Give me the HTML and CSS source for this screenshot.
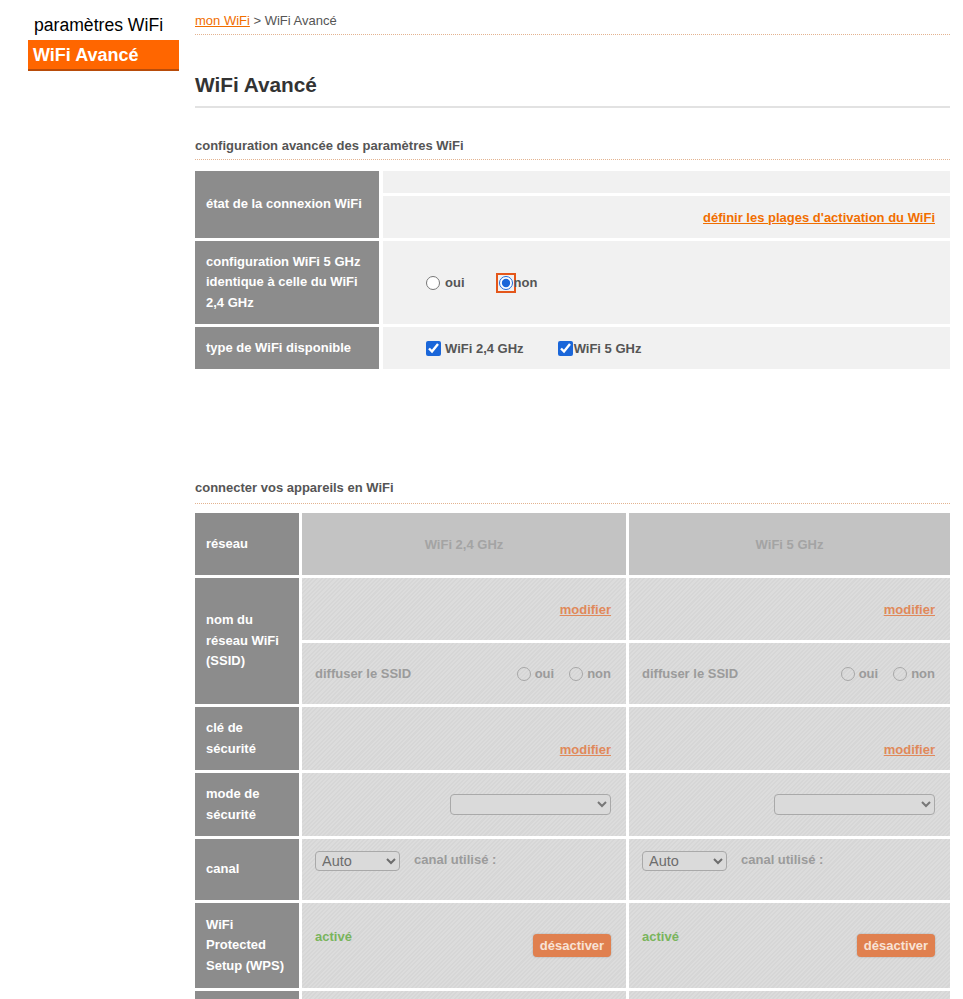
FILE: index.html
```html
<!DOCTYPE html>
<html lang="fr">
<head>
<meta charset="utf-8">
<title>WiFi Avancé</title>
<link rel="stylesheet" href="styles.css">
</head>
<body>
<div class="page">
  <nav class="sidebar">
    <div class="side-item">paramètres WiFi</div>
    <div class="side-item active">WiFi Avancé</div>
  </nav>
  <main class="main">
    <div class="breadcrumb"><a href="#" class="crumb-link">mon WiFi</a> &gt; WiFi Avancé</div>
    <h1 class="title">WiFi Avancé</h1>

    <h2 class="section-title">configuration avancée des paramètres WiFi</h2>
    <div class="grid1">
      <div class="head span2">état de la connexion WiFi</div>
      <div class="cell1"></div>
      <div class="cell1 right"><a href="#" class="link">définir les plages d'activation du WiFi</a></div>

      <div class="head">configuration WiFi 5 GHz identique à celle du WiFi 2,4 GHz</div>
      <div class="cell1 opts">
        <label class="opt"><input type="radio" name="same" class="radio">oui</label>
        <label class="opt tight"><input type="radio" name="same" class="radio focus" checked>non</label>
      </div>

      <div class="head">type de WiFi disponible</div>
      <div class="cell1 opts">
        <label class="opt"><input type="checkbox" class="check" checked>WiFi 2,4 GHz</label>
        <label class="opt tight"><input type="checkbox" class="check" checked>WiFi 5 GHz</label>
      </div>
    </div>

    <h2 class="section-title second">connecter vos appareils en WiFi</h2>
    <div class="grid2">
      <div class="head">réseau</div>
      <div class="band">WiFi 2,4 GHz</div>
      <div class="band">WiFi 5 GHz</div>

      <div class="head span2">nom du réseau WiFi (SSID)</div>
      <div class="cell2 right"><a href="#" class="mod">modifier</a></div>
      <div class="cell2 right"><a href="#" class="mod">modifier</a></div>
      <div class="cell2 between">
        <span>diffuser le SSID</span>
        <span class="radios">
          <label class="ropt"><input type="radio" class="dradio" disabled>oui</label>
          <label class="ropt"><input type="radio" class="dradio" disabled>non</label>
        </span>
      </div>
      <div class="cell2 between">
        <span>diffuser le SSID</span>
        <span class="radios">
          <label class="ropt"><input type="radio" class="dradio" disabled>oui</label>
          <label class="ropt"><input type="radio" class="dradio" disabled>non</label>
        </span>
      </div>

      <div class="head">clé de sécurité</div>
      <div class="cell2 right bottom"><a href="#" class="mod">modifier</a></div>
      <div class="cell2 right bottom"><a href="#" class="mod">modifier</a></div>

      <div class="head">mode de sécurité</div>
      <div class="cell2 right"><select class="sel-mode"><option></option></select></div>
      <div class="cell2 right"><select class="sel-mode"><option></option></select></div>

      <div class="head">canal</div>
      <div class="cell2 top">
        <select class="sel-canal"><option>Auto</option></select>
        <span class="used">canal utilisé :</span>
      </div>
      <div class="cell2 top">
        <select class="sel-canal"><option>Auto</option></select>
        <span class="used">canal utilisé :</span>
      </div>

      <div class="head">WiFi Protected Setup (WPS)</div>
      <div class="cell2 between">
        <span class="active-txt">activé</span>
        <button class="btn">désactiver</button>
      </div>
      <div class="cell2 between">
        <span class="active-txt">activé</span>
        <button class="btn">désactiver</button>
      </div>

      <div class="head"></div>
      <div class="cell2"></div>
      <div class="cell2"></div>
    </div>
  </main>
</div>
</body>
</html>
```

FILE: styles.css
```css
* { box-sizing: border-box; }

body {
  margin: 0;
  background: #fff;
  font-family: "Liberation Sans", Arial, sans-serif;
  color: #555;
}

.page {
  display: flex;
  align-items: flex-start;
}

/* sidebar */
.sidebar {
  flex: none;
  width: 151px;
  margin-left: 28px;
  padding-top: 13px;
}

.side-item {
  height: 27px;
  line-height: 25px;
  padding-left: 6px;
  font-size: 17.6px;
  color: #000;
}

.side-item.active {
  height: 31px;
  line-height: 31px;
  padding-left: 5px;
  background: #ff6600;
  border-bottom: 2px solid #b84c0a;
  color: #fff;
  font-size: 18px;
  font-weight: bold;
}

/* main */
.main {
  flex: none;
  width: 755px;
  margin-left: 16px;
  padding-bottom: 40px;
}

.breadcrumb {
  padding-top: 13px;
  padding-bottom: 5px;
  font-size: 13px;
  line-height: 16px;
  color: #555;
  border-bottom: 1px dotted #e3b390;
}

.crumb-link {
  color: #f16e00;
  text-decoration: underline;
}

.title {
  margin: 38px 0 0;
  padding-bottom: 9px;
  font-size: 20.8px;
  line-height: 24px;
  font-weight: bold;
  color: #333;
  border-bottom: 2px solid #e2e2e2;
}

.section-title {
  margin: 30px 0 0;
  padding-bottom: 5px;
  font-size: 13px;
  line-height: 16px;
  font-weight: bold;
  color: #555;
  border-bottom: 1px dotted #e3b390;
}

.section-title.second {
  margin-top: 111px;
  padding-bottom: 7px;
}

/* grid 1 */
.grid1 {
  display: grid;
  grid-template-columns: 184px 1fr;
  grid-template-rows: 22px 42px 83px 42px;
  column-gap: 4px;
  row-gap: 3px;
  margin-top: 11px;
}

.head {
  display: flex;
  align-items: center;
  padding: 0 11px;
  background: #8c8c8c;
  color: #fff;
  font-size: 13px;
  line-height: 20.5px;
  font-weight: bold;
}

.span2 { grid-row: span 2; }

.cell1 {
  display: flex;
  align-items: center;
  background: #f1f1f1;
}

.cell1.right {
  justify-content: flex-end;
  padding-right: 15px;
}

.link {
  color: #f16e00;
  font-size: 13px;
  font-weight: bold;
  text-decoration: underline;
}

.opts {
  padding-left: 43px;
  font-size: 13px;
  font-weight: bold;
  color: #555;
}

.opt {
  display: flex;
  align-items: center;
  margin-right: 34px;
}

.opt.tight { margin-right: 0; }

.radio, .check {
  width: 14px;
  height: 14px;
  margin: 0 5px 0 0;
  accent-color: #1a66d9;
}

.check {
  width: 15px;
  height: 15px;
  margin-right: 4px;
}

.tight .radio, .tight .check { margin-right: 1px; }

.radio.focus {
  outline: 2px solid #e4571b;
  outline-offset: 1px;
}

/* grid 2 */
.grid2 {
  display: grid;
  grid-template-columns: 104px 324px 321px;
  grid-template-rows: 62px 62px 61px 63px 63px 61px 85px 62px;
  gap: 3px;
  margin-top: 9px;
}

.band {
  display: flex;
  align-items: center;
  justify-content: center;
  background: #c3c3c3;
  color: #a4a4a4;
  font-size: 13px;
  font-weight: bold;
}

.cell2 {
  display: flex;
  align-items: center;
  padding: 0 15px 0 13px;
  background: repeating-linear-gradient(135deg, #dcdcdc 0px, #dcdcdc 1.5px, #d6d6d6 1.5px, #d6d6d6 3px);
  color: #9b9b9b;
  font-size: 13px;
  font-weight: bold;
}

.cell2.right { justify-content: flex-end; }
.cell2.between { justify-content: space-between; }
.cell2.bottom { align-items: flex-end; padding-bottom: 13px; }
.cell2.top { align-items: flex-start; padding-top: 12px; }

.mod {
  color: #e0895a;
  text-decoration: underline;
  font-weight: bold;
}

.radios {
  display: flex;
  align-items: center;
}

.ropt {
  display: flex;
  align-items: center;
  margin-left: 15px;
}

.dradio {
  appearance: none;
  -webkit-appearance: none;
  width: 14px;
  height: 14px;
  margin: 0 4px 0 0;
  border: 1.5px solid #a8a8a8;
  border-radius: 50%;
  background: transparent;
}

.sel-mode {
  width: 161px;
  height: 21px;
  border: 1px solid #a9a9a9;
  border-radius: 4px;
  background: #dadada;
  color: #777;
}

.sel-canal {
  width: 85px;
  height: 20px;
  padding: 0 2px;
  border: 1px solid #a9a9a9;
  border-radius: 4px;
  background: #dadada;
  color: #6d6d6d;
  font-family: "Liberation Sans", Arial, sans-serif;
  font-size: 14.5px;
}

.used { margin-left: 14px; line-height: 18px; }

.active-txt {
  align-self: flex-start;
  margin-top: 26px;
  color: #79b45c;
}

.btn {
  width: 78px;
  height: 23px;
  padding: 0;
  border: 0;
  border-radius: 4px;
  background: #e0804f;
  box-shadow: 0 0 2px rgba(0, 0, 0, 0.25);
  color: #f8e3d6;
  font-family: "Liberation Sans", Arial, sans-serif;
  font-size: 13px;
  font-weight: bold;
}
```
